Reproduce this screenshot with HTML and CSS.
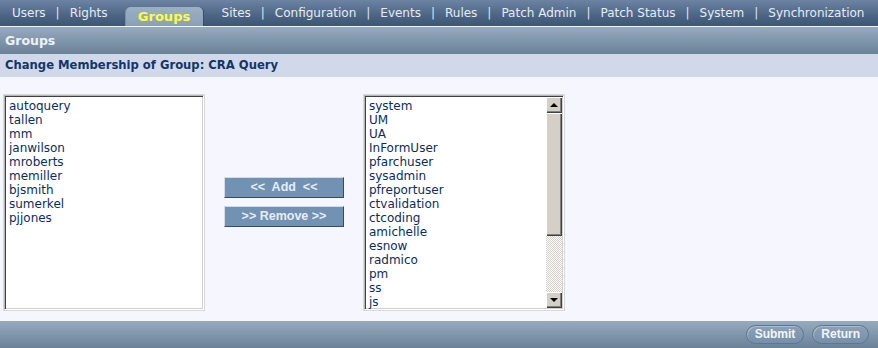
FILE: index.html
```html
<!DOCTYPE html>
<html lang="en">

<head>
    <meta charset="UTF-8">
    <title>Groups</title>
    <link rel="stylesheet" href="styles.css">
</head>

<body>
    <div class="topnav">
        <span class="nav-item">Users</span><span class="sep">|</span>
        <span class="nav-item">Rights</span>
        <span class="nav-tab">Groups</span>
        <span class="nav-item">Sites</span><span class="sep">|</span>
        <span class="nav-item">Configuration</span><span class="sep">|</span>
        <span class="nav-item">Events</span><span class="sep">|</span>
        <span class="nav-item">Rules</span><span class="sep">|</span>
        <span class="nav-item">Patch Admin</span><span class="sep">|</span>
        <span class="nav-item">Patch Status</span><span class="sep">|</span>
        <span class="nav-item">System</span><span class="sep">|</span>
        <span class="nav-item">Synchronization</span>
    </div>

    <div class="pagebar">Groups</div>
    <div class="subbar">Change Membership of Group: CRA Query</div>

    <div class="content">
        <div class="listbox">
            <ul class="options">
                <li>autoquery</li>
                <li>tallen</li>
                <li>mm</li>
                <li>janwilson</li>
                <li>mroberts</li>
                <li>memiller</li>
                <li>bjsmith</li>
                <li>sumerkel</li>
                <li>pjjones</li>
            </ul>
        </div>

        <div class="movers">
            <div class="mover">&lt;&lt;&nbsp; Add &nbsp;&lt;&lt;</div>
            <div class="mover">&gt;&gt; Remove &gt;&gt;</div>
        </div>

        <div class="listbox">
            <ul class="options">
                <li>system</li>
                <li>UM</li>
                <li>UA</li>
                <li>InFormUser</li>
                <li>pfarchuser</li>
                <li>sysadmin</li>
                <li>pfreportuser</li>
                <li>ctvalidation</li>
                <li>ctcoding</li>
                <li>amichelle</li>
                <li>esnow</li>
                <li>radmico</li>
                <li>pm</li>
                <li>ss</li>
                <li>js</li>
            </ul>
            <div class="scrollbar">
                <div class="sb-btn"><span class="arrow-up"></span></div>
                <div class="sb-thumb"></div>
                <div class="sb-track"></div>
                <div class="sb-btn"><span class="arrow-down"></span></div>
            </div>
        </div>
    </div>

    <div class="footer">
        <span class="pill">Submit</span>
        <span class="pill">Return</span>
    </div>
</body>

</html>
```

FILE: styles.css
```css
body {
    margin: 0;
    width: 878px;
    height: 348px;
    font-family: "DejaVu Sans", Verdana, sans-serif;
    background: #f5f6fe;
    overflow: hidden;
}

/* top navigation */
.topnav {
    height: 26px;
    display: flex;
    align-items: flex-end;
    padding-left: 12px;
    background: linear-gradient(#6c84a2, #4d6585 60%, #3e5676);
    color: #e6ecf2;
    font-size: 12px;
    white-space: nowrap;
}
.nav-item,
.sep {
    line-height: 22px;
    height: 22px;
    margin-bottom: 2px;
}
.sep {
    margin: 0 10px 2px 10px;
    color: #dfe6ee;
}
.nav-tab {
    height: 19px;
    line-height: 20px;
    width: 77px;
    margin: 0 19px 0 18px;
    text-align: center;
    font-size: 13px;
    font-weight: bold;
    color: #ffff3a;
    background: linear-gradient(#9cb0c3, #8aa0b5);
    border-radius: 5px 5px 0 0;
    box-shadow: 1px 0 0 #3a4f6a, -1px 0 0 #7890a8;
}

.pagebar {
    height: 27px;
    line-height: 27px;
    padding-left: 5px;
    margin-top: 1px;
    font-size: 12.5px;
    font-weight: bold;
    color: #eef1f5;
    background: linear-gradient(#97abbe, #7e94aa 55%, #6a8198);
}

.subbar {
    height: 23px;
    line-height: 22px;
    padding-left: 5px;
    font-size: 11.6px;
    font-weight: bold;
    color: #13366a;
    background: #d0d8ea;
}

/* lists */
.content {
    height: 244px;
    display: flex;
    align-items: flex-start;
    padding: 18px 0 0 4px;
    box-sizing: border-box;
}
.listbox {
    width: 200px;
    height: 215px;
    box-sizing: border-box;
    display: flex;
    background: #fff;
    border: 1px solid;
    border-color: #b8b8b8 #ffffff #ffffff #b8b8b8;
    box-shadow: inset 1px 1px 0 #404040, inset -1px -1px 0 #d4d0c8, 0 0 0 1px #d8d8d8;
    padding: 1px;
}
.options {
    flex: 1;
    list-style: none;
    margin: 0;
    padding: 2px 0 0 3px;
    font-size: 12px;
    line-height: 14px;
    color: #0c2c5e;
}

.scrollbar {
    width: 16px;
    display: flex;
    flex-direction: column;
}
.sb-btn,
.sb-thumb {
    background: #d4d0c8;
    box-shadow: inset 1px 1px 0 #fff, inset -1px -1px 0 #404040, inset -2px -2px 0 #808080;
}
.sb-btn {
    height: 16px;
    display: flex;
    align-items: center;
    justify-content: center;
}
.sb-thumb {
    height: 123px;
}
.sb-track {
    flex: 1;
    background: repeating-conic-gradient(#ffffff 0 25%, #d4d0c8 0 50%) 0 0 / 2px 2px;
}
.arrow-up {
    border: 4px solid transparent;
    border-top: 0;
    border-bottom: 4px solid #000;
}
.arrow-down {
    border: 4px solid transparent;
    border-bottom: 0;
    border-top: 4px solid #000;
}

.movers {
    width: 120px;
    margin: 82px 20px 0 20px;
    display: flex;
    flex-direction: column;
    gap: 8px;
}
.mover {
    height: 21px;
    box-sizing: border-box;
    text-align: center;
    font-family: "Liberation Sans", Arial, sans-serif;
    font-size: 12.5px;
    font-weight: bold;
    color: #e6edf5;
    background: #7192b3;
    border: 1px solid;
    border-color: #cfdbe6 #3a4a5c #3a4a5c #cfdbe6;
    line-height: 19px;
}

/* footer */
.footer {
    height: 27px;
    display: flex;
    align-items: center;
    justify-content: flex-end;
    gap: 8px;
    padding-right: 9px;
    background: linear-gradient(#97abbe, #7e94aa 55%, #6a8198);
}
.pill {
    height: 19px;
    line-height: 17px;
    box-sizing: border-box;
    padding: 0 8px;
    border-radius: 10px;
    font-family: "Liberation Sans", Arial, sans-serif;
    font-size: 12px;
    font-weight: bold;
    color: #f2f5f8;
    background: linear-gradient(#8ba1b7, #7690aa);
    border: 1px solid #5d7691;
    box-shadow: inset 1px 1px 0 #a9bbcc;
}
```
